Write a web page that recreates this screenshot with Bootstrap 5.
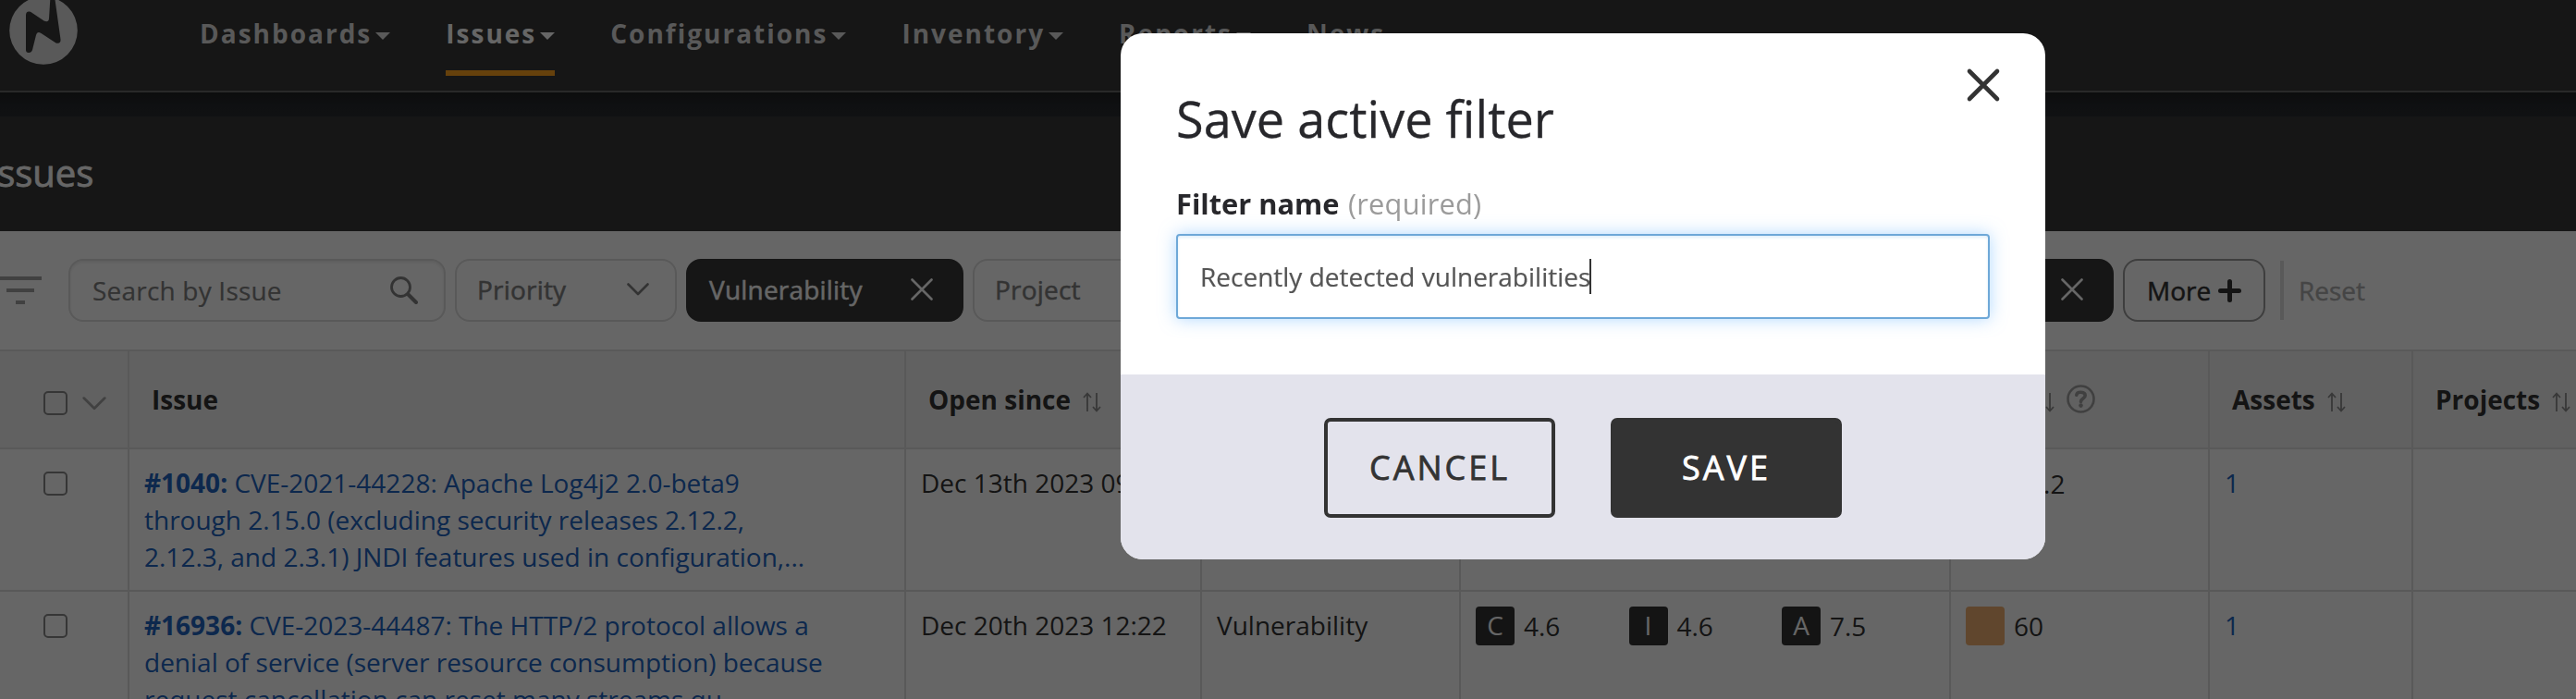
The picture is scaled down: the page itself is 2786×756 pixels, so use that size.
<!DOCTYPE html>
<html lang="en">
<head>
<meta charset="utf-8">
<title>Issues</title>
<link href="https://cdn.jsdelivr.net/npm/bootstrap@5.3.0/dist/css/bootstrap.min.css" rel="stylesheet">
<style>
  html, body { height: 756px; overflow: hidden; }
  body { font-family: "Open Sans", sans-serif; font-size: 28px; line-height: 40px; color: #333; background: #fff; }
  svg { display: block; flex: none; }

  .topbar { height: 100px; background: #373737; border-bottom: 2px solid #686868; padding: 0 0 0 10px; }
  .brand-logo { width: 74px; height: 74px; margin-top: -4px; }
  .main-menu { margin-left: 132px; gap: 60px; }
  .main-menu .nav-link { padding: 16px 0 0; height: 82px; border-bottom: 6px solid transparent; font-weight: 700; letter-spacing: 2px; color: #dedede; gap: 4px; }
  .main-menu .nav-link.active { color: #fff; border-color: #ffa41f; }
  .shade { height: 26px; background: linear-gradient(#202123, #272a2e 60%, #292c30); }
  .page-head { height: 124px; background: #373737; color: #fff; padding: 33px 0 0; }
  .page-head h1 { font-size: 40px; line-height: 56px; font-weight: 500; margin: 0 0 0 -14px; -webkit-text-stroke: .8px; }

  .filters { height: 128px; padding-top: 30px; gap: 10px; }
  .filter-icon { width: 55px; margin-right: 9px; height: 68px; }
  .pill { height: 68px; border: 2px solid #dedede; border-radius: 16px; padding: 0 22px 2px; color: #808080; font-weight: 500; letter-spacing: .2px; -webkit-text-stroke: .5px; flex: none; white-space: nowrap; }
  .pill svg { -webkit-text-stroke: 0; }
  .pill-on { background: #373737; border-color: #373737; color: #fff; padding-left: 23px; }
  .pill-search { width: 408px; padding: 0 28px 0 24px; box-shadow: inset 0 2px 3px rgba(0,0,0,.08); -webkit-text-stroke: .2px; }
  .rule { width: 4px; height: 64px; background: #dedede; margin: 2px 0 0 6px; }
  .reset-link { color: #acacac; margin: 14px 0 0 6px; font-weight: 500; -webkit-text-stroke: .4px; }

  .issues { width: 2788px; table-layout: fixed; border-collapse: separate; border-spacing: 0; margin: 0; border-top: 2px solid #dedede; color: #333; }
  .issues > :not(caption) > * > * { border: 0 solid #dedede; border-width: 0 2px 2px 0; padding: 16px; color: #333; vertical-align: top; height: 154px; }
  .issues > thead > tr > th { background: #f3f3f3; height: 106px; padding: 32px 0 0 24px; font-weight: 700; box-shadow: none; }
  .issues a { color: #2164c0; text-decoration: none; }
  .issues > :not(caption) > * > .pick { padding: 24px 0 0 47px; }
  .issues > thead > tr > th.pick { padding-top: 43px; }
  .tick { width: 26px; height: 26px; border: 2px solid #888; border-radius: 5px; }
  .chip { width: 42px; height: 42px; border-radius: 4px; background: #333; color: #fff; text-align: center; flex: none; }
  .score { gap: 10px; width: 165.5px; flex: none; }

  .modal-backdrop.show { opacity: .6; }
  .save-dialog { width: 1000px; max-width: none; margin: 36px 0 0 1212px; }
  .save-dialog .modal-content { border: 0; border-radius: 24px; color: #27272b; overflow: hidden; }
  .save-dialog .modal-body { padding: 60px 60px 59px; height: 369px; }
  .save-dialog h2 { font-size: 54px; line-height: 64px; font-weight: 400; margin: 0 0 40px; letter-spacing: .05px; -webkit-text-stroke: .3px; }
  .field-label { font-size: 30.8px; line-height: 40px; font-weight: 700; margin-bottom: 13px; display: block; }
  .field-label span { font-weight: 400; color: #9b9b9b; letter-spacing: .2px; margin-left: 1.5px; }
  .name-field { height: 92px; border: 2px solid #6ea8d8; border-radius: 4px; padding: 24px 22px 0 24px; font-size: 28px; line-height: 40px; color: #555; box-shadow: 0 0 18px rgba(100,180,255,.5), inset 0 2px 3px rgba(80,160,230,.18); -webkit-text-stroke: .2px; }
  .caret-bar { width: 2px; height: 38px; background: #333; margin: 1px 0 0 -1px; }
  .save-dialog .btn-close-x { position: absolute; top: 35px; right: 46px; padding: 0; }
  .save-dialog .modal-footer { background: #e3e3ec; border: 0; border-radius: 0; height: 200px; padding: 2px 0 0; gap: 60px; }
  .save-dialog .modal-footer > .btn { width: 250px; height: 108px; margin: 0; border: 4px solid #333; border-radius: 7px; font-size: 36px; font-weight: 500; letter-spacing: 3px; color: #333; padding: 0; -webkit-text-stroke: .8px; }
  .save-dialog .modal-footer > .btn-solid { background: #333; color: #fff; }
</style>
</head>
<body>
<svg width="0" height="0" class="position-absolute">
  <symbol id="caret" viewBox="0 0 16 8"><path d="M0 0h16L8 8z" fill="currentColor"/></symbol>
  <symbol id="cross" viewBox="0 0 24 24"><path d="M1.500 1.500l21 21M22.500 1.500l-21 21" stroke="currentColor" stroke-width="2.600" stroke-linecap="round"/></symbol>
  <symbol id="chev" viewBox="0 0 24 14"><path d="M1.500 1.500L12 12 22.500 1.500" fill="none" stroke="currentColor" stroke-width="2.600" stroke-linecap="round" stroke-linejoin="round"/></symbol>
  <symbol id="sort" viewBox="0 0 20 22"><path d="M5 21V2M1 6l4-4.500L9 6M15 1v19M11 16l4 4.500 4-4.500" fill="none" stroke="currentColor" stroke-width="1.800"/></symbol>
</svg>

<header class="topbar d-flex">
  <svg class="brand-logo" viewBox="0 0 74 74"><circle cx="37" cy="37" r="36.800" fill="#dedede"/><path d="M18 20.500q0-5 5-3.800L37.500 26.500q5 2.500 5.500-2.500L44.500 0h4.500L55.500 46.500q.500 5.500-5 4L34.500 40q-4.500-2.500-5.500 2l-4 16q-1 3-4 3-3 0-3-3z" fill="#373737"/></svg>
  <ul class="nav main-menu flex-nowrap">
    <li><a class="nav-link d-flex" href="#">Dashboards<svg width="16" height="8" style="margin-top:19px"><use href="#caret"/></svg></a></li>
    <li><a class="nav-link active d-flex" href="#">Issues<svg width="16" height="8" style="margin-top:19px"><use href="#caret"/></svg></a></li>
    <li><a class="nav-link d-flex" href="#">Configurations<svg width="16" height="8" style="margin-top:19px"><use href="#caret"/></svg></a></li>
    <li><a class="nav-link d-flex" href="#">Inventory<svg width="16" height="8" style="margin-top:19px"><use href="#caret"/></svg></a></li>
    <li><a class="nav-link d-flex" href="#">Reports<svg width="16" height="8" style="margin-top:19px"><use href="#caret"/></svg></a></li>
    <li><a class="nav-link" href="#">News</a></li>
  </ul>
</header>
<div class="shade"></div>
<div class="page-head"><h1>Issues</h1></div>

<div class="filters d-flex">
  <svg class="filter-icon" viewBox="0 0 55 68"><path d="M0 21h45M7 34h30M17 47h10" stroke="#a3a3a3" stroke-width="4"/></svg>
  <div class="pill pill-search d-flex align-items-center justify-content-between"><span>Search by Issue</span>
    <svg width="30" height="30" viewBox="0 0 30 30" fill="none" stroke="#808080" stroke-linecap="round"><circle cx="11.500" cy="11.500" r="10" stroke-width="2.800"/><path d="M19.500 19.500l8.500 8.500" stroke-width="4"/></svg></div>
  <div class="pill d-flex align-items-center justify-content-between" style="width:240px;padding-right:28px">Priority<svg width="24" height="14"><use href="#chev"/></svg></div>
  <div class="pill pill-on d-flex align-items-center justify-content-between" style="width:300px;padding-right:31px">Vulnerability<svg width="24" height="24"><use href="#cross"/></svg></div>
  <div class="pill d-flex align-items-center justify-content-between" style="width:240px;padding-right:28px">Project<svg width="24" height="14"><use href="#chev"/></svg></div>
  <div class="pill d-flex align-items-center justify-content-end" style="width:330px;padding-right:28px"><svg width="24" height="14"><use href="#chev"/></svg></div>
  <div class="pill d-flex align-items-center justify-content-end" style="width:310px;padding-right:28px"><svg width="24" height="14"><use href="#chev"/></svg></div>
  <div class="pill pill-on d-flex align-items-center justify-content-end" style="width:324px;padding-right:31px"><svg width="24" height="24"><use href="#cross"/></svg></div>
  <div class="pill d-flex align-items-center justify-content-between" style="width:154px;padding:0 24px 0 24px;border-color:#9b9b9b;color:#333;letter-spacing:0">More<svg width="25" height="25" viewBox="0 0 25 25"><path d="M12.500 2.500v20M2.500 12.500h20" stroke="#333" stroke-width="5" stroke-linecap="round"/></svg></div>
  <div class="rule"></div>
  <div class="reset-link">Reset</div>
</div>

<table class="table issues">
  <colgroup><col style="width:140px"><col style="width:840px"><col style="width:320px"><col style="width:280px"><col style="width:530px"><col style="width:280px"><col style="width:220px"><col style="width:178px"></colgroup>
  <thead>
    <tr>
      <th class="pick"><div class="d-flex align-items-center"><span class="tick"></span><svg width="26" height="15" style="margin-left:16px;color:#a3a3a3"><use href="#chev"/></svg></div></th>
      <th>Issue</th>
      <th><div class="d-flex">Open since<svg width="20" height="22" style="margin:12px 0 0 13px;color:#8c8c8c"><use href="#sort"/></svg></div></th>
      <th>Type</th>
      <th>Severity</th>
      <th><div class="d-flex">Risk<svg width="20" height="22" style="margin:12px 0 0 10px;color:#8c8c8c"><use href="#sort"/></svg><svg width="31" height="31" viewBox="0 0 31 31" style="margin:4px 0 0 13px" fill="none" stroke="#a0a0a0"><circle cx="15.500" cy="15.500" r="14" stroke-width="2.600"/><path d="M10.800 11.200c.6-4 9.400-4 9.400.600 0 3.400-4.700 3-4.700 6.600" stroke-width="3.600" stroke-linecap="round"/><circle cx="15.500" cy="22.600" r="2.300" fill="#a0a0a0" stroke="none"/></svg></div></th>
      <th><div class="d-flex">Assets<svg width="20" height="22" style="margin:12px 0 0 13px;color:#8c8c8c"><use href="#sort"/></svg></div></th>
      <th><div class="d-flex">Projects<svg width="20" height="22" style="margin:12px 0 0 13px;color:#8c8c8c"><use href="#sort"/></svg></div></th>
    </tr>
  </thead>
  <tbody>
    <tr>
      <td class="pick"><div class="tick"></div></td>
      <td><a href="#"><b>#1040:</b> CVE-2021-44228: Apache Log4j2 2.0-beta9<br>through 2.15.0 (excluding security releases 2.12.2,<br>2.12.3, and 2.3.1) JNDI features used in configuration,...</a></td>
      <td>Dec 13th 2023 09:41</td>
      <td></td>
      <td></td>
      <td><div class="score d-flex align-items-center"><span class="chip"></span>79.2</div></td>
      <td><a href="#">1</a></td>
      <td></td>
    </tr>
    <tr>
      <td class="pick"><div class="tick"></div></td>
      <td><a href="#"><b>#16936:</b> CVE-2023-44487: The HTTP/2 protocol allows a<br>denial of service (server resource consumption) because<br>request cancellation can reset many streams qu</a></td>
      <td>Dec 20th 2023 12:22</td>
      <td>Vulnerability</td>
      <td><div class="d-flex"><div class="score d-flex align-items-center"><span class="chip">C</span>4.6</div><div class="score d-flex align-items-center"><span class="chip">I</span>4.6</div><div class="score d-flex align-items-center"><span class="chip">A</span>7.5</div></div></td>
      <td><div class="score d-flex align-items-center"><span class="chip" style="background:#f0b070"></span>60</div></td>
      <td><a href="#">1</a></td>
      <td></td>
    </tr>
  </tbody>
</table>

<div class="modal-backdrop show"></div>
<div class="modal show d-block overflow-hidden" tabindex="-1">
  <div class="modal-dialog save-dialog">
    <div class="modal-content">
      <div class="modal-body">
        <h2>Save active filter</h2>
        <label class="field-label">Filter name <span>(required)</span></label>
        <div class="form-control name-field d-flex"><span>Recently detected vulnerabilities</span><span class="caret-bar"></span></div>
        <button type="button" class="btn btn-close-x" aria-label="Close"><svg width="40" height="40" viewBox="0 0 40 40"><path d="M5 5l30 30M35 5L5 35" stroke="#333" stroke-width="4.600" stroke-linecap="round"/></svg></button>
      </div>
      <div class="modal-footer justify-content-center">
        <button type="button" class="btn">CANCEL</button>
        <button type="button" class="btn btn-solid">SAVE</button>
      </div>
    </div>
  </div>
</div>
<script src="https://cdn.jsdelivr.net/npm/bootstrap@5.3.0/dist/js/bootstrap.bundle.min.js"></script>
</body>
</html>
